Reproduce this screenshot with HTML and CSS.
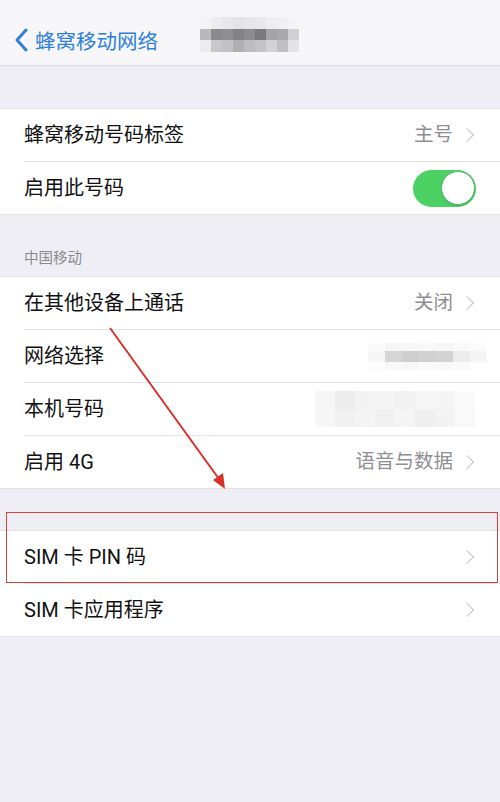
FILE: index.html
```html
<!DOCTYPE html>
<html lang="zh">
<head>
<meta charset="utf-8">
<title>蜂窝移动网络</title>
<link rel="stylesheet" href="styles.css">
</head>
<body>
<div class="page">
  <header class="nav">
    <div class="back">
      <svg class="back-icon" viewBox="0 0 14 24" width="14" height="24"><path d="M12 2 L3 12 L12 22" fill="none" stroke="#2f7fdc" stroke-width="3" stroke-linecap="round" stroke-linejoin="round"/></svg>
      <span class="back-text">蜂窝移动网络</span>
    </div>
    <div class="mosaic nav-mosaic">
      <i style="background:#f3f3f5"></i><i style="background:#eeeef0"></i><i style="background:#e8e8ea"></i><i style="background:#e4e4e6"></i><i style="background:#e6e6e8"></i><i style="background:#e9e9eb"></i><i style="background:#eeeef0"></i><i style="background:#f0f0f2"></i><i style="background:#f5f5f7"></i>
      <i style="background:#b9b9bb"></i><i style="background:#8a8a8c"></i><i style="background:#8f8f91"></i><i style="background:#838385"></i><i style="background:#8c8c8e"></i><i style="background:#7a7a7c"></i><i style="background:#a4a4a6"></i><i style="background:#a9a9ab"></i><i style="background:#d0d0d2"></i>
      <i style="background:#ececee"></i><i style="background:#c8c8ca"></i><i style="background:#c2c2c4"></i><i style="background:#b0b0b2"></i><i style="background:#bdbdbf"></i><i style="background:#c4c4c6"></i><i style="background:#d3d3d5"></i><i style="background:#c0c0c2"></i><i style="background:#e4e4e6"></i>
    </div>
  </header>

  <div class="spacer s1"></div>
  <section class="group">
    <div class="row">
      <span class="label">蜂窝移动号码标签</span>
      <span class="value">主号</span>
      <span class="chev"></span>
    </div>
    <div class="row">
      <span class="label">启用此号码</span>
      <span class="toggle"><span class="knob"></span></span>
    </div>
  </section>

  <div class="group-header">中国移动</div>
  <section class="group">
    <div class="row">
      <span class="label">在其他设备上通话</span>
      <span class="value">关闭</span>
      <span class="chev"></span>
    </div>
    <div class="row">
      <span class="label">网络选择</span>
      <div class="mosaic net-mosaic">
        <i style="background:#fafafa"></i><i style="background:#f6f6f6"></i><i style="background:#f7f7f7"></i><i style="background:#f8f8f8"></i><i style="background:#f6f6f6"></i><i style="background:#f9f9f9"></i><i style="background:#fbfbfb"></i>
        <i style="background:#f7f7f7"></i><i style="background:#d6d6d6"></i><i style="background:#cfcfcf"></i><i style="background:#d1d1d1"></i><i style="background:#d3d3d3"></i><i style="background:#ececec"></i><i style="background:#f4f4f4"></i>
        <i style="background:#fcfcfc"></i><i style="background:#f8f8f8"></i><i style="background:#f7f7f7"></i><i style="background:#f9f9f9"></i><i style="background:#f8f8f8"></i><i style="background:#fafafa"></i><i style="background:#fdfdfd"></i>
      </div>
    </div>
    <div class="row">
      <span class="label">本机号码</span>
      <div class="mosaic num-mosaic">
        <i style="background:#f6f6f6"></i><i style="background:#ededed"></i><i style="background:#f3f3f3"></i><i style="background:#f4f4f4"></i><i style="background:#f2f2f2"></i><i style="background:#f6f6f6"></i><i style="background:#f5f5f5"></i><i style="background:#fafafa"></i>
        <i style="background:#f7f7f7"></i><i style="background:#f1f1f1"></i><i style="background:#f4f4f4"></i><i style="background:#f1f1f1"></i><i style="background:#f5f5f5"></i><i style="background:#efefef"></i><i style="background:#f3f3f3"></i><i style="background:#f9f9f9"></i>
      </div>
    </div>
    <div class="row">
      <span class="label">启用 4G</span>
      <span class="value">语音与数据</span>
      <span class="chev"></span>
    </div>
  </section>

  <div class="spacer s3"></div>
  <section class="group">
    <div class="row">
      <span class="label">SIM 卡 PIN 码</span>
      <span class="chev"></span>
    </div>
    <div class="row">
      <span class="label">SIM 卡应用程序</span>
      <span class="chev"></span>
    </div>
  </section>

  <div class="highlight"></div>
  <svg class="arrow" width="500" height="802" viewBox="0 0 500 802">
    <line x1="110" y1="328" x2="219" y2="479" stroke="#d8302a" stroke-width="2"/>
    <polygon points="225,489 213,480 223,473" fill="#d8302a"/>
  </svg>
</div>
</body>
</html>
```

FILE: styles.css
```css
html, body {
  margin: 0;
  padding: 0;
}
body {
  background: #efeef4;
  font-family: Roboto, "Noto Sans CJK SC", sans-serif;
  color: #111;
}
.page {
  position: relative;
  width: 500px;
  min-height: 802px;
  overflow: hidden;
}
.nav {
  height: 66px;
  box-sizing: border-box;
  padding-top: 15px;
  background: #f7f7f9;
  border-bottom: 1px solid #dddce2;
  display: flex;
  align-items: center;
  gap: 40px;
}
.back {
  display: flex;
  align-items: center;
  padding-left: 14px;
  gap: 7px;
  height: 50px;
}
.back-icon {
  display: block;
  margin-top: -1px;
}
.back-text {
  font-family: "Noto Sans CJK SC", sans-serif;
  font-size: 20.5px;
  color: #2f7fdc;
  line-height: 1;
}
.mosaic {
  display: grid;
  flex: none;
}
.mosaic i {
  display: block;
}
.nav-mosaic {
  grid-template-columns: repeat(9, 11px);
  grid-template-rows: 12px 11px 12px;
  margin-top: -12px;
  margin-left: 2px;
}
.spacer.s1 { height: 42px; }
.spacer.s3 { height: 41px; }
.group {
  background: #fff;
  border-top: 1px solid #e2e1e6;
  border-bottom: 1px solid #e2e1e6;
}
.row {
  height: 52px;
  display: flex;
  align-items: center;
  margin-left: 24px;
  padding-right: 25px;
  border-bottom: 1px solid #e3e3e6;
  position: relative;
}
.row:last-child {
  border-bottom: none;
}
.label {
  flex: 1;
  font-size: 20px;
  line-height: 1;
  color: #111;
}
.value {
  font-size: 19.5px;
  line-height: 1;
  color: #8e8e93;
  margin-right: 9px;
}
.chev {
  width: 9px;
  height: 9px;
  border-right: 1.8px solid #c4c4c9;
  border-top: 1.8px solid #c4c4c9;
  transform: rotate(45deg);
  margin-right: 3px;
  flex: none;
}
.toggle {
  width: 63px;
  height: 37px;
  border-radius: 19px;
  background: #4cd263;
  display: flex;
  align-items: center;
  justify-content: flex-end;
  box-sizing: border-box;
  padding-right: 1px;
  margin-right: -1px;
}
.knob {
  width: 34px;
  height: 34px;
  border-radius: 50%;
  background: #fff;
  box-shadow: 0 1px 2px rgba(0,0,0,0.15);
  border: 1px solid #5bb56a;
  box-sizing: border-box;
}
.net-mosaic {
  grid-template-columns: repeat(7, 17px);
  grid-template-rows: 8px 11px 8px;
  margin-right: -12px;
}
.num-mosaic {
  grid-template-columns: repeat(8, 20px);
  grid-template-rows: 18px 18px;
  margin-right: 0px;
}
.group-header {
  height: 61px;
  box-sizing: border-box;
  padding: 35px 0 0 24px;
  font-family: "Noto Sans CJK SC", sans-serif;
  font-size: 14.5px;
  color: #8a8a90;
  line-height: 1;
}
.highlight {
  position: absolute;
  left: 6px;
  top: 512px;
  width: 490px;
  height: 69px;
  border: 1.5px solid #d9413d;
  pointer-events: none;
}
.arrow {
  position: absolute;
  left: 0;
  top: 0;
  pointer-events: none;
}
```
